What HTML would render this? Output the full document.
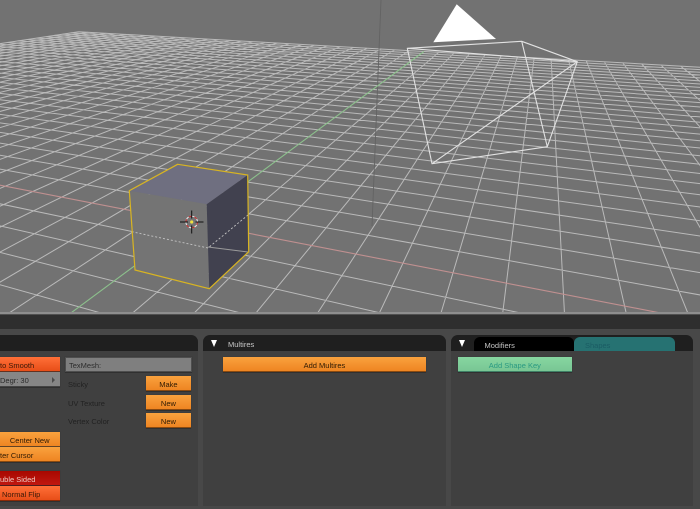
<!DOCTYPE html>
<html>
<head>
<meta charset="utf-8">
<style>
html,body{margin:0;padding:0;width:700px;height:509px;overflow:hidden;background:#484848;}
#root{position:relative;width:700px;height:509px;overflow:hidden;background:#484848;font-family:"Liberation Sans",sans-serif;font-size:7.5px;filter:blur(.3px);}
svg{position:absolute;left:0;top:0;}
.a{position:absolute;box-sizing:border-box;}
.panel{position:absolute;top:335px;height:171px;background:#404040;border-radius:7px 7px 0 0;}
.head{position:absolute;left:0;right:0;top:0;height:16px;background:#1f1f1f;border-radius:7px 7px 0 0;}
.btn{position:absolute;box-sizing:border-box;height:15px;line-height:17px;text-align:center;color:#2e1a04;white-space:nowrap;overflow:hidden;border-bottom:1px solid #8a4a10;box-shadow:0 1px 0 #303030,0 0 0 .5px #3a3a3a;}
.or{background:linear-gradient(#f9a23e,#ee8522);}
.rd{background:linear-gradient(#ff7038,#e84e18);border-bottom-color:#8a2a08;}
.dr{background:linear-gradient(#a80800,#c01810);color:#eec8c0;border-bottom-color:#600;}
.lb{position:absolute;color:#222;white-space:nowrap;line-height:10px;}
.tri{position:absolute;width:0;height:0;border-left:3.5px solid transparent;border-right:3.5px solid transparent;border-top:7px solid #fff;}
</style>
</head>
<body>
<div id="root">
<svg id="view" width="700" height="313" viewBox="0 0 700 313" style="background:#727272">
  <g id="grid" fill="none" stroke="#bababa" stroke-width="1"></g>
  <line x1="381" y1="0" x2="372" y2="226" stroke="#636363" stroke-width=".9"/>
  <g id="axes" fill="none" stroke-width="1.1"></g>
  <polygon points="177.7,164.3 247.7,175 206.7,204.3 129.3,190.7" fill="#6f6f80"/>
  <polygon points="129.3,190.7 206.7,204.3 209.3,288.7 135,270" fill="#747474"/>
  <polygon points="206.7,204.3 247.7,175 248.7,251.7 209.3,288.7" fill="#41414f"/>
  <line x1="208" y1="247" x2="248" y2="252" stroke="#9a9a9a" stroke-width=".9"/>
  <path d="M131.7 231.7L208 248L248 215" fill="none" stroke="#c4c4c4" stroke-width=".9" stroke-dasharray="2 2"/>
  <polygon points="177.7,164.3 247.7,175 248.7,251.7 209.3,288.7 135,270 129.3,190.7" fill="none" stroke="#d8b422" stroke-width="1.2"/>
  <circle cx="191.7" cy="222" r="5.8" fill="none" stroke="#e8e8e8" stroke-width="1"/>
  <circle cx="191.7" cy="222" r="5.8" fill="none" stroke="#c02020" stroke-width="1" stroke-dasharray="3 3"/>
  <path d="M180 222H188M195.5 222H203.5M191.7 210.5V218.5M191.7 225.5V233.5" stroke="#111" stroke-width="1" fill="none"/>
  <circle cx="191.7" cy="222" r="1.6" fill="#f0e040"/>
  <polygon points="456.7,4.3 433.3,42.3 496,39" fill="#fff"/>
  <path d="M407.3 48.3L521.7 41.3L577.3 61.7L407.3 48.3L432 163.7L547.3 146.7L577.3 61.7L432 163.7M521.7 41.3L547.3 146.7" fill="none" stroke="#e2e2e2" stroke-width="1.1" stroke-linejoin="round"/>
</svg>

<div class="a" style="left:0;top:312px;width:700px;height:2px;background:#8e8e8e"></div>
<div class="a" style="left:0;top:314px;width:700px;height:1px;background:#505050"></div>
<div class="a" style="left:0;top:315px;width:700px;height:14px;background:#2e2e2e"></div>

<div class="panel" style="left:-20px;width:218px"><div class="head"></div></div>
<div class="panel" style="left:203px;width:243px"><div class="head"></div></div>
<div class="panel" style="left:451px;width:242px"><div class="head"></div></div>

<div class="tri" style="left:210.5px;top:340px"></div>
<div class="lb" style="left:228px;top:339.5px;color:#c8c8c8">Multires</div>
<div class="tri" style="left:458.5px;top:340px"></div>

<div class="a" style="left:474px;top:337px;width:100px;height:14px;background:#000;border-radius:6px 6px 0 0"></div>
<div class="lb" style="left:484.5px;top:340.5px;color:#c4c4c4">Modifiers</div>
<div class="a" style="left:574px;top:337px;width:101px;height:14px;background:#267272;border-radius:6px 6px 0 0"></div>
<div class="lb" style="left:585px;top:340.5px;color:#1b5c64">Shapes</div>

<!-- left panel -->
<div class="btn rd" style="left:0;top:357px;width:59.5px;text-align:left;color:#3a1808">to Smooth</div>
<div class="btn" style="left:0;top:372px;width:59.5px;background:#868686;text-align:left;color:#2a2a2a;border-bottom-color:#444">Degr: 30</div>
<div class="a" style="left:52px;top:376.5px;width:0;height:0;border-left:3.5px solid #4c4c4c;border-top:3px solid transparent;border-bottom:3px solid transparent"></div>

<div class="btn" style="left:65px;top:357px;width:126.5px;background:#7f7f7f;text-align:left;padding-left:3px;color:#2c2c2c;border:1px solid #4e4e4e;line-height:15px">TexMesh:</div>

<div class="lb" style="left:68px;top:379.5px">Sticky</div>
<div class="btn or" style="left:145.7px;top:375.5px;width:45.5px">Make</div>
<div class="lb" style="left:68px;top:398.5px">UV Texture</div>
<div class="btn or" style="left:145.7px;top:394.7px;width:45.5px">New</div>
<div class="lb" style="left:68px;top:416.5px">Vertex Color</div>
<div class="btn or" style="left:145.7px;top:412.7px;width:45.5px">New</div>

<div class="btn or" style="left:0;top:432px;width:59.5px;text-align:right;padding-right:10px">Center New</div>
<div class="btn or" style="left:0;top:447px;width:59.5px;text-align:left">ter Cursor</div>
<div class="btn dr" style="left:0;top:470.5px;width:59.5px;text-align:left">uble Sided</div>
<div class="btn rd" style="left:0;top:485.5px;width:59.5px;text-align:left;padding-left:2px;color:#3a1808">Normal Flip</div>

<div class="btn or" style="left:222.7px;top:357px;width:203.5px">Add Multires</div>
<div class="btn" style="left:457.7px;top:357px;width:114.3px;background:linear-gradient(#86d6a0,#78c694);color:#2a9a82;border-bottom-color:#3f7f66">Add Shape Key</div>
</div>
<script>
(function(){
var O=[193,222.5],V1=[-1158,-39],V2=[546,-39],u=-0.0269,v=0.061,XMIN=-30,YMAX=31;
function P(X,Y){var d=1+X*u+Y*v;return [(O[0]+X*u*V1[0]+Y*v*V2[0])/d,(O[1]+X*u*V1[1]+Y*v*V2[1])/d,d];}
function seg(p,V){
 var dx=p[0]-V[0],dy=p[1]-V[1],t=50;
 if(dy>0) t=Math.min(t,(314-p[1])/dy);
 if(dx>0) t=Math.min(t,(702-p[0])/dx);
 if(dx<0) t=Math.min(t,(-2-p[0])/dx);
 if(t<=0) return '';
 return 'M'+p[0].toFixed(1)+' '+p[1].toFixed(1)+'L'+(p[0]+dx*t).toFixed(1)+' '+(p[1]+dy*t).toFixed(1);
}
function trimStart(p,V){
 if(p[0]<-2){var k=(-2-V[0])/(p[0]-V[0]);return [V[0]+(p[0]-V[0])*k,V[1]+(p[1]-V[1])*k,p[2]];}
 return p;
}
var d='',i,p;
for(i=-40;i<=40;i++){
 if(i!==0){
  if(i>=XMIN){p=P(i,YMAX); if(p[2]>0) d+=seg(p,V2);}
  if(i<=YMAX){p=P(XMIN,i); if(p[2]>0 && p[0]>V1[0]){ d+=seg(trimStart(p,V1),V1);}}
 }
}
d+=seg(trimStart(P(XMIN,YMAX),V1),V1);
var NS='http://www.w3.org/2000/svg';
var g=document.createElementNS(NS,'path');g.setAttribute('d',d);
document.getElementById('grid').appendChild(g);
var ax=document.getElementById('axes');
var r=document.createElementNS(NS,'path');r.setAttribute('d',seg(trimStart(P(XMIN,0),V1),V1));r.setAttribute('stroke','#c09090');ax.appendChild(r);
var gr=document.createElementNS(NS,'path');gr.setAttribute('d',seg(P(0,YMAX),V2));gr.setAttribute('stroke','#8cc08c');ax.appendChild(gr);
})();
</script>
</body>
</html>
